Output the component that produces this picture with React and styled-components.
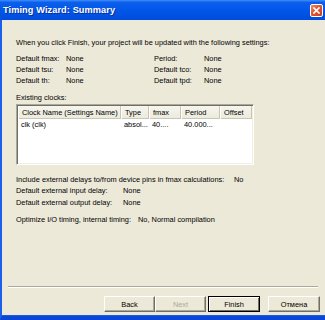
import React from 'react';
import styled, { createGlobalStyle } from 'styled-components';

const GlobalStyle = createGlobalStyle`
  html, body {
    margin: 0;
    padding: 0;
    background: #ece9d8;
  }
  body {
    font-family: "Liberation Sans", Arial, sans-serif;
    font-size: 7.4px;
    color: #000;
  }
`;

const Window = styled.div`
  box-sizing: border-box;
  width: 325px;
  height: 320px;
  display: flex;
  flex-direction: column;
  background: #ece9d8;
  border-left: 2px solid #1c5fe8;
  border-bottom: 4px solid #0a46d8;
  box-shadow: inset 0 -1px 0 #1d5ae0;
`;

const TitleBar = styled.div`
  height: 20px;
  flex: none;
  display: flex;
  align-items: center;
  justify-content: space-between;
  padding: 0 2px 0 3px;
  margin-left: -2px;
  background: linear-gradient(to bottom, #3f8ff8 0%, #0c5fec 12%, #0056e8 55%, #004cdc 100%);
`;

const Title = styled.div`
  color: #fff;
  font-weight: bold;
  font-size: 9.2px;
  letter-spacing: 0.1px;
  text-shadow: 1px 1px 0 #0a2f9c;
`;

const CloseButton = styled.div`
  width: 13px;
  height: 13px;
  box-sizing: border-box;
  border: 1px solid #fff;
  border-radius: 2px;
  background: linear-gradient(135deg, #f0886a 0%, #e2542f 45%, #c9401f 100%);
  display: flex;
  align-items: center;
  justify-content: center;
`;

const Body = styled.div`
  flex: 1;
  display: flex;
  flex-direction: column;
  padding: 17px 0 0 14px;
`;

const Line = styled.div`
  line-height: 11px;
  height: 11px;
  white-space: nowrap;
  margin-top: ${p => p.$top || 0}px;
`;

const SettingsGrid = styled.div`
  display: grid;
  grid-template-columns: 50px 88px 50px auto;
  grid-auto-rows: 11px;
  line-height: 11px;
  margin-top: 5px;
  white-space: nowrap;
`;

const ListBox = styled.div`
  box-sizing: border-box;
  width: 238px;
  height: 61px;
  margin-top: 1px;
  background: #fff;
  border-top: 1px solid #aca899;
  border-left: 1px solid #aca899;
  border-right: 1px solid #fff;
  border-bottom: 1px solid #fff;
  box-shadow: inset 1px 1px 0 #716f64, inset -1px -1px 0 #f1efe2;
  padding: 1px;
`;

const ListRow = styled.div`
  display: flex;
  height: ${p => (p.$header ? 13 : 12)}px;
  line-height: ${p => (p.$header ? 13 : 12)}px;
  background: ${p => (p.$header ? 'linear-gradient(to bottom, #f6f5ee, #ebeadb)' : 'transparent')};
  box-shadow: ${p => (p.$header ? 'inset 0 -1px 0 #cbc7b8' : 'none')};
`;

const Cell = styled.div`
  box-sizing: border-box;
  width: ${p => p.$w}px;
  flex: none;
  padding-left: ${p => (p.$header ? 4 : 3)}px;
  white-space: nowrap;
  overflow: hidden;
  border-right: ${p => (p.$header ? '1px solid #c7c5b2' : 'none')};
  box-shadow: ${p => (p.$header ? 'inset 1px 0 0 #fff' : 'none')};
`;

const Pair = styled.div`
  display: flex;
  line-height: 11.5px;
  height: 11.5px;
  white-space: nowrap;
  margin-top: ${p => p.$top || 0}px;
`;

const PairLabel = styled.div`
  width: ${p => p.$w}px;
  flex: none;
`;

const Footer = styled.div`
  flex: none;
  display: flex;
  flex-direction: column;
`;

const Separator = styled.div`
  height: 1px;
  margin: 0 7px 0 6px;
  background: #aca899;
  border-bottom: 1px solid #fff;
`;

const ButtonRow = styled.div`
  display: flex;
  justify-content: flex-end;
  padding: 8px 5px 4px 0;
`;

const Button = styled.div`
  box-sizing: border-box;
  width: ${p => p.$w || 52}px;
  height: 16px;
  margin-left: ${p => p.$gap || 0}px;
  display: flex;
  align-items: center;
  justify-content: center;
  background: #ece9d8;
  color: ${p => (p.$disabled ? '#aca899' : '#000')};
  border-top: 1px solid #fff;
  border-left: 1px solid #fff;
  border-right: 1px solid #716f64;
  border-bottom: 1px solid #716f64;
  box-shadow: inset -1px -1px 0 #aca899;
  ${p => p.$default && `
    border: 1px solid #000;
    box-shadow: inset 1px 1px 0 #fff, inset -1px -1px 0 #716f64;
  `}
`;

const clockColumns = [103, 28, 32, 39, 32];

export default function App() {
  return (
    <>
      <GlobalStyle />
      <Window>
        <TitleBar>
          <Title>Timing Wizard: Summary</Title>
          <CloseButton>
            <svg width="7" height="7" viewBox="0 0 7 7">
              <path d="M1 1 L6 6 M6 1 L1 6" stroke="#fff" strokeWidth="1.6" strokeLinecap="square" />
            </svg>
          </CloseButton>
        </TitleBar>
        <Body>
          <Line>When you click Finish, your project will be updated with the following settings:</Line>
          <SettingsGrid>
            <div>Default fmax:</div><div>None</div><div>Period:</div><div>None</div>
            <div>Default tsu:</div><div>None</div><div>Default tco:</div><div>None</div>
            <div>Default th:</div><div>None</div><div>Default tpd:</div><div>None</div>
          </SettingsGrid>
          <Line $top={6}>Existing clocks:</Line>
          <ListBox>
            <ListRow $header>
              {['Clock Name (Settings Name)', 'Type', 'fmax', 'Period', 'Offset'].map((h, i) => (
                <Cell key={h} $header $w={clockColumns[i]}>{h}</Cell>
              ))}
            </ListRow>
            <ListRow>
              {['clk (clk)', 'absol...', '40....', '40.000...', ''].map((v, i) => (
                <Cell key={i} $w={clockColumns[i]}>{v}</Cell>
              ))}
            </ListRow>
          </ListBox>
          <Pair $top={8.5}>
            <PairLabel $w={218}>Include external delays to/from device pins in fmax calculations:</PairLabel>
            <div>No</div>
          </Pair>
          <Pair>
            <PairLabel $w={107}>Default external input delay:</PairLabel>
            <div>None</div>
          </Pair>
          <Pair>
            <PairLabel $w={107}>Default external output delay:</PairLabel>
            <div>None</div>
          </Pair>
          <Pair $top={5.5}>
            <PairLabel $w={122}>Optimize I/O timing, internal timing:</PairLabel>
            <div>No, Normal compilation</div>
          </Pair>
        </Body>
        <Footer>
          <Separator />
          <ButtonRow>
            <Button $w={51}>Back</Button>
            <Button $w={51} $disabled>Next</Button>
            <Button $w={52} $gap={2} $default>Finish</Button>
            <Button $w={52} $gap={8}>Отмена</Button>
          </ButtonRow>
        </Footer>
      </Window>
    </>
  );
}
